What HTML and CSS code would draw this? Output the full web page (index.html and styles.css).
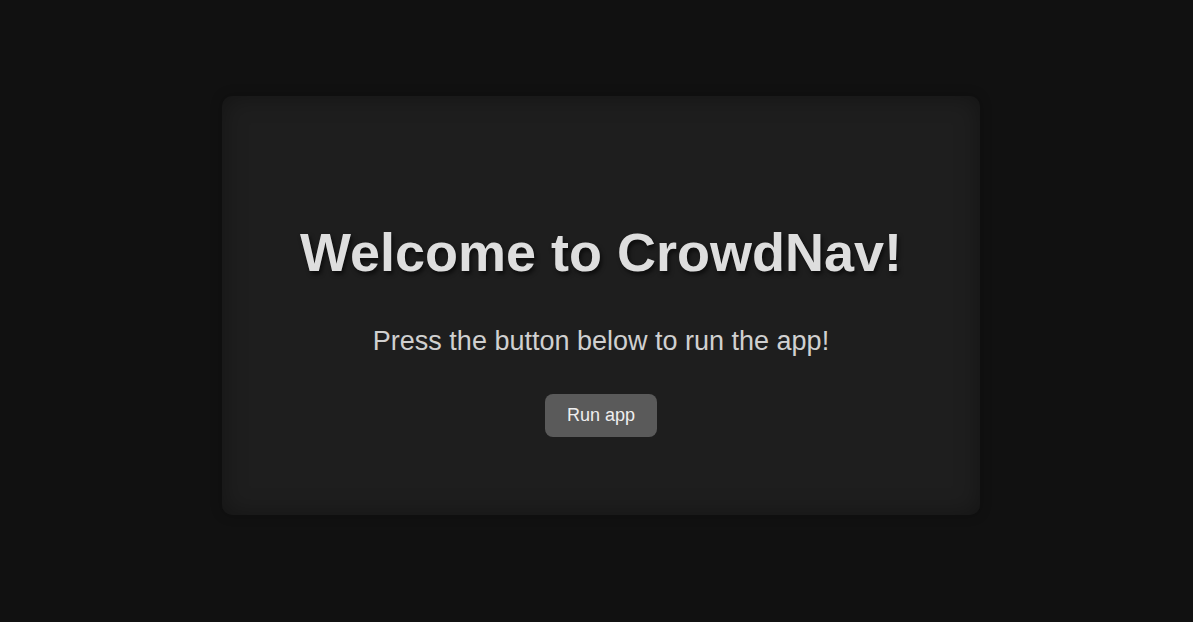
FILE: index.html
```html
<!DOCTYPE html>
<html lang="en">
<head>
<meta charset="utf-8">
<title>CrowdNav</title>
<link rel="stylesheet" href="styles.css">
</head>
<body>
<main class="page">
  <section class="card">
    <h1 class="title">Welcome to CrowdNav!</h1>
    <p class="subtitle">Press the button below to run the app!</p>
    <button class="run-btn" type="button">Run app</button>
  </section>
</main>
</body>
</html>
```
FILE: styles.css
```css
html, body {
  margin: 0;
  padding: 0;
  background: #111111;
  height: 100%;
}
body {
  font-family: "Liberation Sans", Arial, sans-serif;
}
.page {
  min-height: 100vh;
  box-sizing: border-box;
  display: flex;
  align-items: center;
  justify-content: center;
  padding: 0 0 11px 9px;
}
.card {
  width: 758px;
  height: 419px;
  box-sizing: border-box;
  background: #1e1e1e;
  border-radius: 10px;
  box-shadow: inset 0 0 24px rgba(0, 0, 0, 0.35), 0 0 12px rgba(0, 0, 0, 0.25);
  display: flex;
  flex-direction: column;
  align-items: center;
  justify-content: center;
  padding-top: 46px;
}
.title {
  margin: 0;
  font-size: 54px;
  font-weight: bold;
  line-height: 62px;
  color: #dedede;
  text-shadow: 2px 3px 4px rgba(0, 0, 0, 0.6);
}
.subtitle {
  margin: 42px 0 0;
  font-size: 27px;
  line-height: 32px;
  color: #d0d0d0;
}
.run-btn {
  margin-top: 37px;
  width: 112px;
  height: 43px;
  border: none;
  border-radius: 8px;
  background: #5a5a5a;
  color: #eeeeee;
  font-family: "Liberation Sans", Arial, sans-serif;
  font-size: 18px;
  cursor: pointer;
}
```
